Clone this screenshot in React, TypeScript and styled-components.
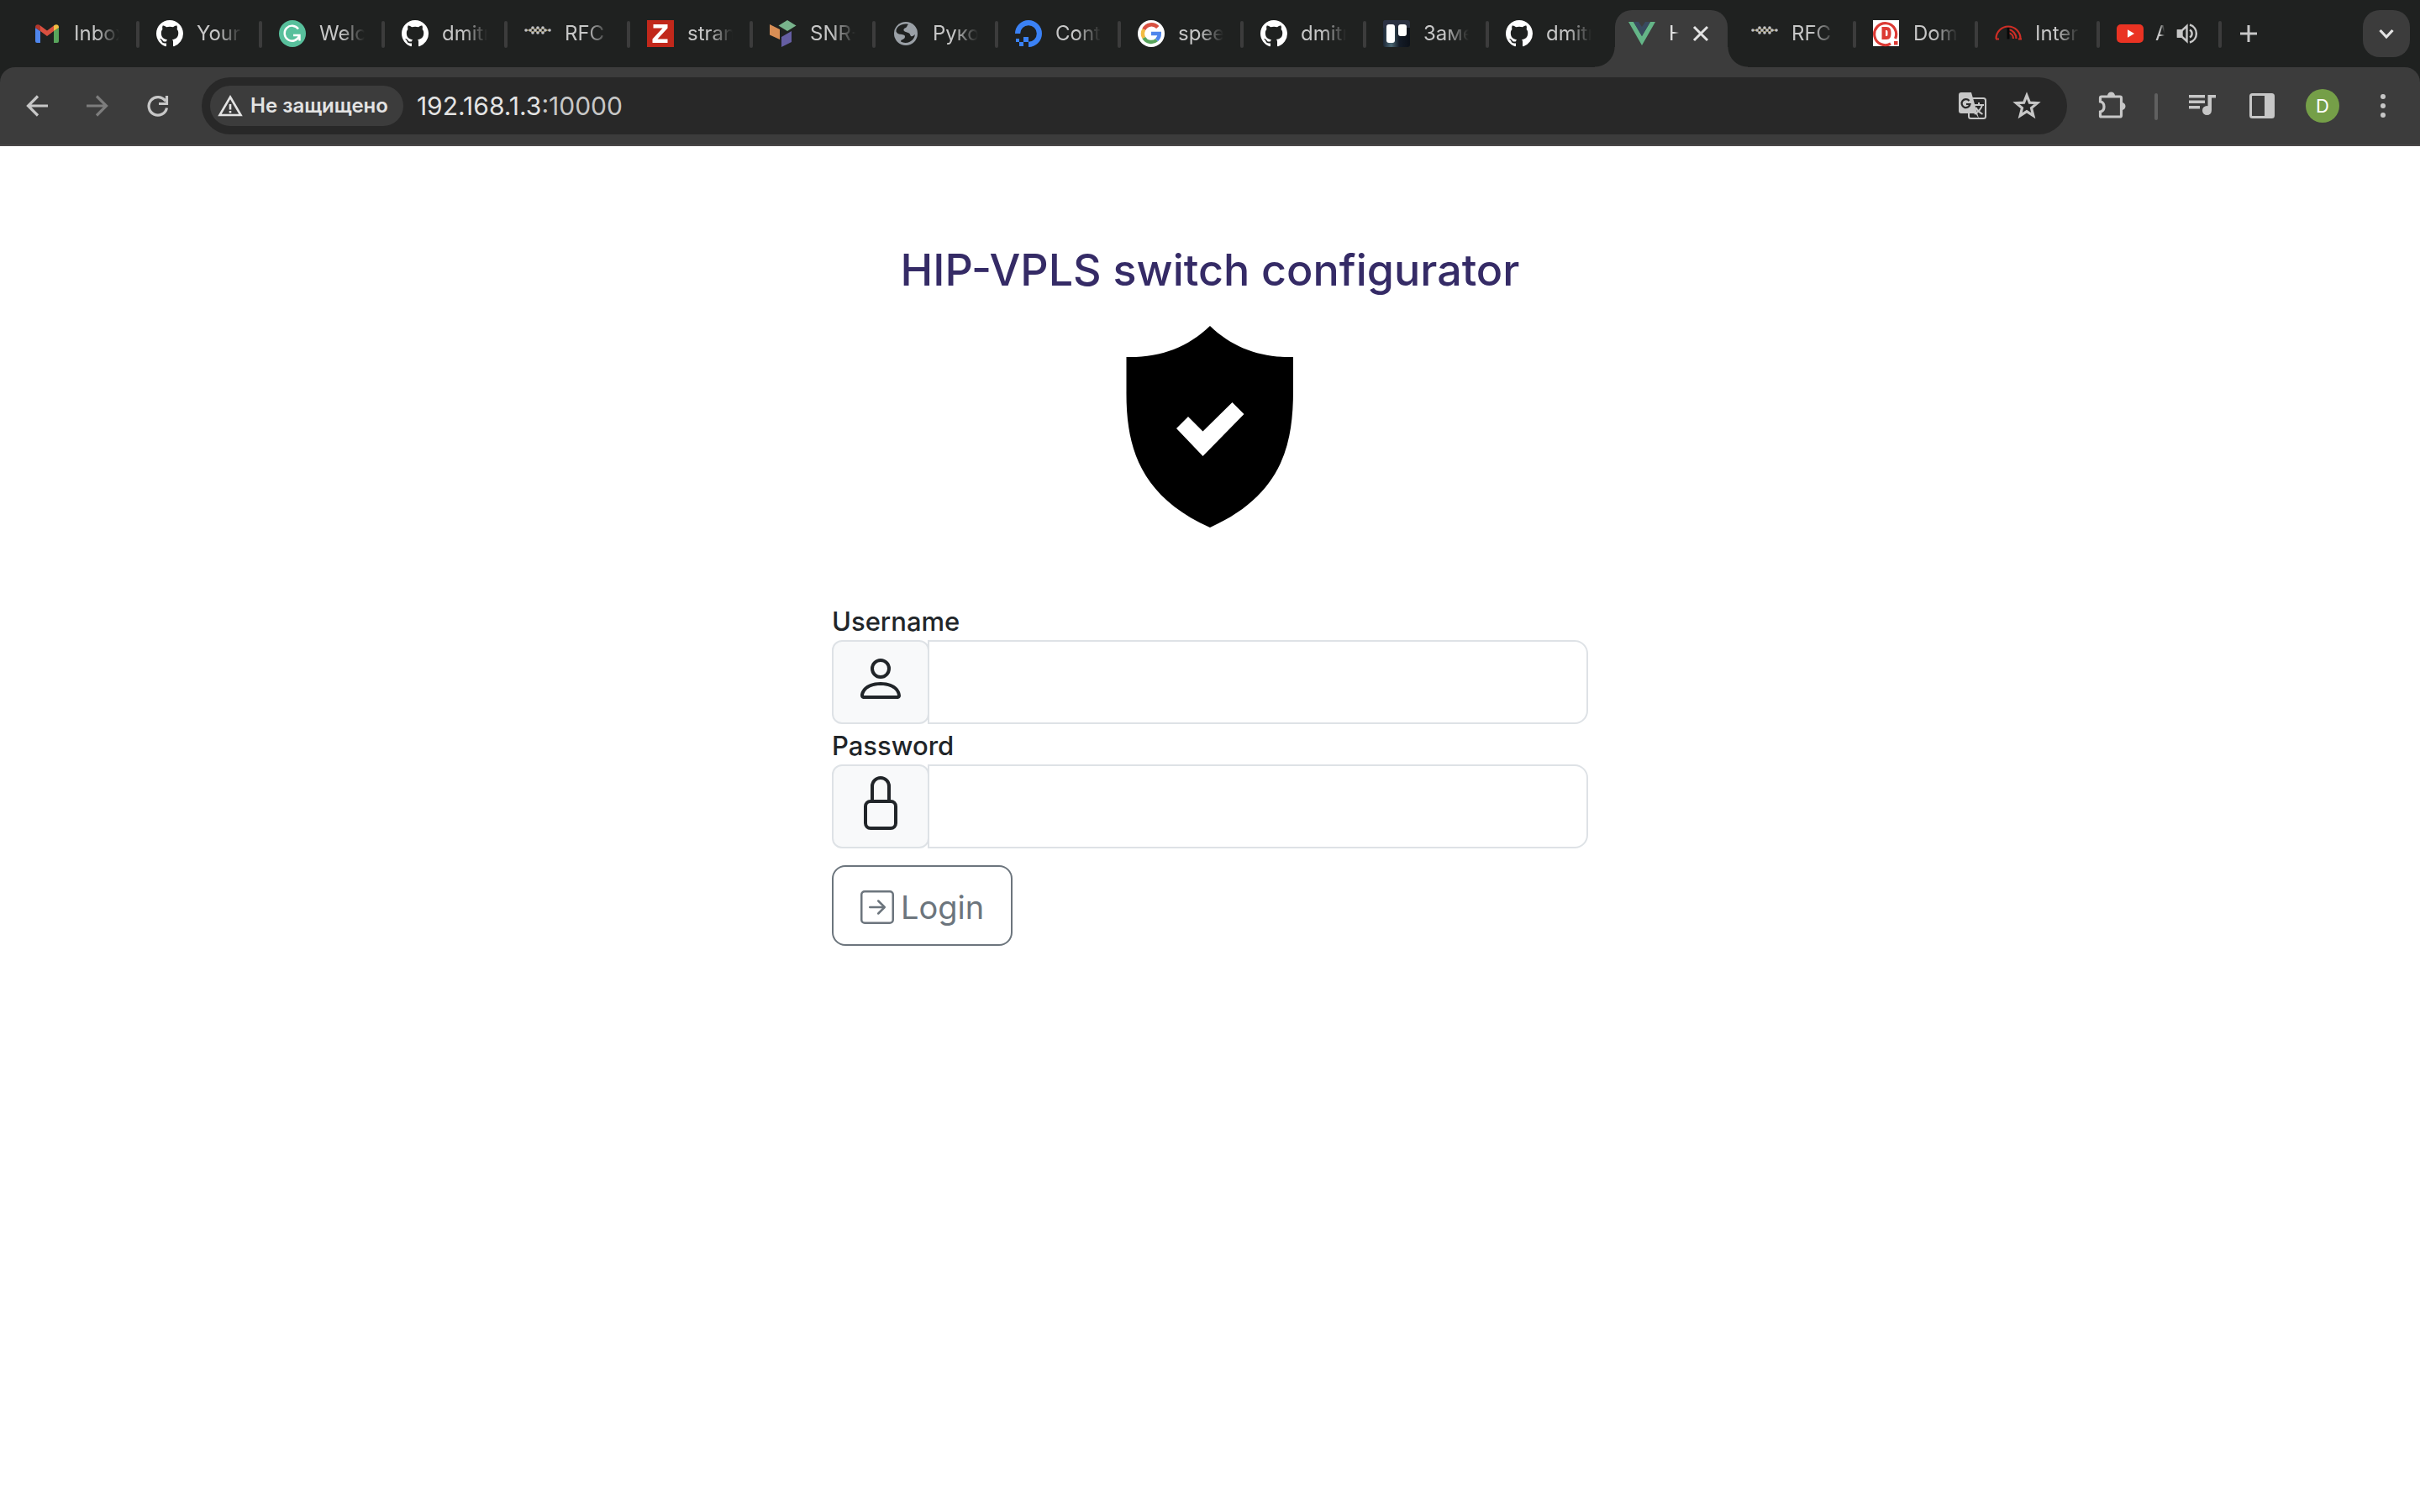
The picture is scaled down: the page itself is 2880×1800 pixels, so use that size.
import React from "react";
import styled, { createGlobalStyle, css } from "styled-components";

const colors = {
  strip: "#1f2120",
  toolbar: "#3c3c3c",
  omnibox: "#282828",
  icon: "#c7c7c7",
  iconDim: "#7d7d7d",
  bright: "#e3e3e3",
  title: "#352b66",
  body: "#212529",
  border: "#dee2e6",
  addon: "#f8f9fa",
  secondary: "#6c757d",
};

const GlobalStyle = createGlobalStyle`
  * { box-sizing: border-box; }
  body {
    margin: 0;
    background: #fff;
    font-family: Inter, "Liberation Sans", sans-serif;
    color: ${colors.body};
  }
  button, input { font: inherit; color: inherit; }
  svg { display: block; flex: none; }
`;

/* ---------- browser chrome ---------- */

const Chrome = styled.header`
  background: ${colors.strip};
`;

const TabStrip = styled.nav`
  display: flex;
  height: 80px;
  padding: 0 12px 0 20px;
`;

const tabBase = css`
  display: flex;
  align-items: center;
  gap: 16px;
  flex: none;
  border: 0;
  background: none;
`;

const Tab = styled.button<{ $width?: number }>`
  ${tabBase}
  width: ${({ $width = 142 }) => $width}px;
  padding: 0 20px;
  text-align: left;
  color: ${colors.icon};
`;

const AudioTab = styled(Tab)`
  gap: 14px;
  padding-right: 24px;
`;

const ActiveTab = styled.div`
  ${tabBase}
  position: relative;
  width: 134px;
  margin: 12px 8px 0;
  padding: 0 22px 12px 16px;
  border-radius: 20px 20px 0 0;
  background: ${colors.toolbar};
  color: ${colors.bright};

  &::before,
  &::after {
    content: "";
    position: absolute;
    bottom: 0;
    width: 24px;
    height: 24px;
  }
  &::before {
    right: 100%;
    background: radial-gradient(circle at 0 0, transparent 23px, ${colors.toolbar} 24px);
  }
  &::after {
    left: 100%;
    background: radial-gradient(circle at 100% 0, transparent 23px, ${colors.toolbar} 24px);
  }
`;

const TabTitle = styled.span`
  flex: 1;
  min-width: 0;
  overflow: hidden;
  white-space: nowrap;
  font-size: 24px;
  line-height: 32px;
  mask-image: linear-gradient(to right, #000 calc(100% - 28px), transparent);
`;

const ShortTitle = styled(TabTitle)`
  mask-image: linear-gradient(to right, #000 50%, transparent);
`;

const Separator = styled.span`
  flex: none;
  align-self: center;
  width: 4px;
  height: 32px;
  margin-bottom: -2px;
  border-radius: 2px;
  background: ${({ color }) => color || colors.toolbar};
`;

const IconButton = styled.button<{ $size?: number; $dim?: boolean }>`
  display: grid;
  place-items: center;
  flex: none;
  width: ${({ $size = 40 }) => $size}px;
  height: ${({ $size = 40 }) => $size}px;
  padding: 0;
  border: 0;
  background: none;
  color: ${({ $dim }) => ($dim ? colors.iconDim : colors.icon)};
`;

const NewTab = styled(IconButton)`
  align-self: center;
  margin-left: 12px;
`;

const TabSearch = styled(IconButton)`
  align-self: center;
  width: 56px;
  height: 56px;
  margin-left: auto;
  border-radius: 20px;
  background: ${colors.toolbar};
  color: ${colors.bright};
`;

const Toolbar = styled.div`
  display: flex;
  align-items: center;
  height: 94px;
  padding: 0 24px;
  border-bottom: 2px solid #4a4748;
  border-radius: 18px 18px 0 0;
  background: ${colors.toolbar};
`;

const NavGroup = styled.div`
  display: flex;
  gap: 32px;
`;

const Omnibox = styled.div`
  display: flex;
  align-items: center;
  flex: 1;
  height: 68px;
  margin-left: 32px;
  padding: 0 28px 0 10px;
  border-radius: 34px;
  background: ${colors.omnibox};
`;

const SecurityChip = styled.button`
  display: flex;
  align-items: center;
  gap: 8px;
  flex: none;
  height: 48px;
  padding: 0 18px 0 8px;
  border: 0;
  border-radius: 24px;
  background: ${colors.toolbar};
  color: ${colors.bright};
  font-size: 24px;
  font-weight: 600;
  line-height: 32px;
`;

const Address = styled.a`
  flex: 1;
  margin-left: 16px;
  color: ${colors.bright};
  font-size: 30px;
  line-height: 36px;
  text-decoration: none;
`;

const Port = styled.span`
  color: ${colors.icon};
`;

const OmniActions = styled.div`
  display: flex;
  gap: 24px;
`;

const ToolGroup = styled.div`
  display: flex;
  align-items: center;
  gap: 32px;
  margin-left: 32px;
`;

const Avatar = styled.button`
  width: 40px;
  height: 40px;
  padding: 0;
  border: 0;
  border-radius: 50%;
  background: #759f48;
  color: #fff;
  font-size: 22px;
  line-height: 40px;
`;

/* ---------- page ---------- */

const Page = styled.main`
  display: flex;
  flex-direction: column;
  align-items: center;
  padding: 114px 24px;
`;

const Heading = styled.h1`
  margin: 0 0 32px;
  color: ${colors.title};
  font-size: 52px;
  font-weight: 500;
  line-height: 68px;
`;

const LoginForm = styled.form`
  display: flex;
  flex-direction: column;
  align-items: flex-start;
  width: 100%;
  max-width: 900px;
  margin-top: 86px;
`;

const FieldLabel = styled.label`
  padding-top: 4px;
  font-size: 31px;
  font-weight: 500;
  line-height: 44px;
`;

const InputGroup = styled.div`
  display: flex;
  width: 100%;
`;

const Addon = styled.span`
  flex: none;
  padding: 12px 24px 20px;
  border: 2px solid ${colors.border};
  border-radius: 12px;
  background: ${colors.addon};
`;

const TextInput = styled.input`
  flex: 1;
  min-width: 0;
  margin-left: -2px;
  padding: 16px 32px;
  border: 2px solid ${colors.border};
  border-radius: 0 16px 16px 0;
  background: #fff;
  font-size: 38px;
  outline: 0;
`;

const LoginButton = styled.button`
  display: flex;
  align-items: center;
  gap: 8px;
  margin-top: 20px;
  padding: 18px 32px 14px;
  border: 2px solid ${colors.secondary};
  border-radius: 16px;
  background: #fff;
  color: ${colors.secondary};
  font-size: 38px;
  line-height: 60px;
`;

/* ---------- favicons ---------- */

const Gmail = () => (
  <svg width="32" height="32" viewBox="0 0 32 32">
    <path d="M2 9v16a2 2 0 0 0 2 2h4V13z" fill="#4f86ec" />
    <path d="M30 9v16a2 2 0 0 1-2 2h-4V13z" fill="#58a55c" />
    <path d="M8 6.500l8 6 8-6V13l-8 6-8-6z" fill="#d95040" />
    <path d="M2 8.500C2 5 5.500 4.500 8 6.500V13l-6-4z" fill="#b3372c" />
    <path d="M30 8.500C30 5 26.500 4.500 24 6.500V13l6-4z" fill="#f2bd42" />
  </svg>
);

const GitHub = () => (
  <svg width="32" height="32" viewBox="0 0 16 16" fill="#fff">
    <path d="M8 0C3.58 0 0 3.58 0 8c0 3.54 2.29 6.53 5.47 7.59.4.07.55-.17.55-.38 0-.19-.01-.82-.01-1.49-2.01.37-2.53-.49-2.69-.94-.09-.23-.48-.94-.82-1.13-.28-.15-.68-.52-.01-.53.63-.01 1.08.58 1.23.82.72 1.21 1.87.87 2.33.66.07-.52.28-.87.51-1.07-1.78-.2-3.64-.89-3.64-3.95 0-.87.31-1.59.82-2.15-.08-.2-.36-1.02.08-2.12 0 0 .67-.21 2.2.82.64-.18 1.32-.27 2-.27s1.36.09 2 .27c1.53-1.04 2.2-.82 2.2-.82.44 1.1.16 1.92.08 2.12.51.56.82 1.27.82 2.15 0 3.07-1.87 3.75-3.65 3.95.29.25.54.73.54 1.48 0 1.07-.01 1.93-.01 2.2 0 .21.15.46.55.38A8.010 8.010 0 0 0 16 8c0-4.420-3.580-8-8-8" />
  </svg>
);

const Grammarly = () => (
  <svg width="32" height="32" viewBox="0 0 32 32">
    <circle cx="16" cy="16" r="16" fill="#58c09c" />
    <path d="M23 10.500A9 9 0 1 0 24 19" fill="none" stroke="#fff" strokeWidth="2.400" />
    <path d="M17 18h7.500v6.500" fill="none" stroke="#fff" strokeWidth="2.400" />
  </svg>
);

const knots: [number, number][] = [
  [2, 12], [7, 12], [10, 9], [10, 15], [13, 12], [16, 9], [16, 15], [19, 12], [22, 9], [22, 15], [25, 12], [30, 12],
];

const Ietf = () => (
  <svg width="32" height="32" viewBox="0 0 32 32">
    <path d="M1 12h6l3-3 6 6 6-6 3 3h6M7 12l3 3 6-6 6 6 3-3" fill="none" stroke="#a08a4a" strokeWidth="1.400" />
    {knots.map(([x, y]) => (
      <circle key={`${x}-${y}`} cx={x} cy={y} r="1.800" fill="#bfc1c6" />
    ))}
  </svg>
);

const Zed = () => (
  <svg width="32" height="32" viewBox="0 0 32 32">
    <path d="M0 0h32v32H0z" fill="#c1281b" />
    <path d="M7.500 5h17v4.500L12.500 22.500h12V27H6.500v-4.500l12-13h-11z" fill="#fff" />
  </svg>
);

const Snr = () => (
  <svg width="32" height="32" viewBox="0 0 32 32">
    <path d="M21 0l10.500 6.500L21 13 10.500 6.500z" fill="#78b48c" />
    <path d="M0 5l12 6v12L0 17.500z" fill="#d98e55" />
    <path d="M26 13v13l-12 6V20z" fill="#655ea3" />
  </svg>
);

const Globe = () => (
  <svg width="32" height="32" viewBox="0 0 32 32">
    <circle cx="16" cy="16" r="14" fill="#9aa0a6" />
    <path
      d="M19 5c-2 1-1 3-3 4-3 1-3 3-2 4 2 2 6 1 7 4 1 4 4 2 6 0A11.500 11.500 0 0 1 10 25.500c0-3 5-2 5-6 0-3-5-2-7-3-2-.5-3-2-3.500-3C4 8 12 3 19 5z"
      fill={colors.strip}
    />
  </svg>
);

const DigitalOcean = () => (
  <svg width="32" height="32" viewBox="0 0 32 32" fill="#3b82f6">
    <path d="M16 32v-6.200A9.800 9.800 0 1 0 6.200 16H0a16 16 0 1 1 16 16z" />
    <path d="M10 20h6v6h-6zM5 26h5v5H5zM1 22h4v4H1z" />
  </svg>
);

const Google = () => (
  <svg width="32" height="32" viewBox="0 0 32 32">
    <circle cx="16" cy="16" r="16" fill="#fff" />
    <g fill="none" strokeWidth="4.400">
      <path d="M23.800 8.600A10 10 0 0 0 7.300 11.200" stroke="#d95040" />
      <path d="M7.300 11.200a10 10 0 0 0 0 9.800" stroke="#f2bd42" />
      <path d="M7.300 21a10 10 0 0 0 15.200 2.600" stroke="#58a55c" />
      <path d="M22.500 23.600A10 10 0 0 0 25.800 16H16" stroke="#4f86ec" />
    </g>
  </svg>
);

const Trello = () => (
  <svg width="32" height="32" viewBox="0 0 32 32">
    <defs>
      <linearGradient id="night" x1="0" y1="1" x2="1" y2="1">
        <stop offset="0" stopColor="#1d2735" />
        <stop offset=".3" stopColor="#4a6672" />
        <stop offset=".6" stopColor="#141c28" />
        <stop offset="1" stopColor="#0c1119" />
      </linearGradient>
    </defs>
    <rect width="32" height="32" rx="3" fill="url(#night)" />
    <path d="M0 3a3 3 0 0 1 3-3h26a3 3 0 0 1 3 3v6H0z" fill="#2b3142" />
    <rect x="4" y="5" width="10" height="22" rx="3" fill="#fff" />
    <rect x="18" y="5" width="10" height="14" rx="3" fill="#fff" />
  </svg>
);

const Vue = () => (
  <svg width="32" height="32" viewBox="0 0 32 32">
    <path d="M0 2h6l10 17L26 2h6L16 30z" fill="#64b587" />
    <path d="M6 2h6l4 6 4-6h6L16 19z" fill="#384a5f" />
  </svg>
);

const Domain = () => (
  <svg width="32" height="32" viewBox="0 0 32 32">
    <path d="M0 0h31v31H0z" fill="#fff" />
    <path d="M26.500 22A13 13 0 1 0 21 28" fill="none" stroke="#dc3a34" strokeWidth="3.200" />
    <path d="M10.500 8h5.500c4.500 0 5.500 3 5.500 7.500S20.500 23 16 23h-5.500z" fill="#dc3a34" />
    <path d="M15 12v7c2.500 0 2.500-.5 2.500-3.500s0-3.500-2.500-3.500z" fill="#fff" />
    <rect x="25" y="25" width="4.500" height="4.500" fill="#dc3a34" />
  </svg>
);

const Speed = () => (
  <svg width="32" height="32" viewBox="0 0 32 32" fill="none" stroke="#cf2e26" strokeWidth="2.200">
    <path d="M1 22.500h4M28 22.500h4M1.500 22A14.500 14.500 0 0 1 30.500 22" />
    <path d="M16 11a11 11 0 0 1 9.500 11M16 15a7 7 0 0 1 6 7" />
    <path d="M16 9v13.500" stroke="#080808" strokeWidth="3" />
  </svg>
);

const YouTube = () => (
  <svg width="32" height="32" viewBox="0 0 32 32">
    <rect y="5" width="32" height="22" rx="5" fill="#ea3323" />
    <path d="M13 11.300v9.400l8-4.700z" fill="#fff" />
  </svg>
);

/* ---------- control icons ---------- */

const Arrow = ({ back = false }: { back?: boolean }) => (
  <svg width="40" height="40" viewBox="0 0 40 40" fill="none" stroke="currentColor" strokeWidth="3.200">
    {back ? <path d="M33 20H10M21 8.500L9.500 20 21 31.500" /> : <path d="M7 20h23M19 8.500L30.500 20 19 31.500" />}
  </svg>
);

const Reload = () => (
  <svg width="40" height="40" viewBox="0 0 40 40" fill="none" stroke="currentColor" strokeWidth="3.200">
    <path d="M29 14.500A10.800 10.800 0 1 0 30.500 22.500M30.500 8v9.500H21" />
  </svg>
);

const Warning = () => (
  <svg width="32" height="32" viewBox="0 0 32 32">
    <path d="M16 5.500L28.500 27h-25z" fill="none" stroke="currentColor" strokeWidth="2.600" />
    <path d="M14.700 14h2.600v6.500h-2.600zM14.700 22h2.600v2.500h-2.600z" fill="currentColor" />
  </svg>
);

const Close = () => (
  <svg width="20" height="20" viewBox="0 0 20 20" stroke={colors.bright} strokeWidth="3">
    <path d="M2 2l16 16M18 2L2 18" />
  </svg>
);

const Plus = () => (
  <svg width="24" height="24" viewBox="0 0 24 24" stroke="currentColor" strokeWidth="3">
    <path d="M12 2v20M2 12h20" />
  </svg>
);

const Chevron = () => (
  <svg width="24" height="24" viewBox="0 0 24 24" fill="none" stroke="currentColor" strokeWidth="3.200">
    <path d="M4.500 8l7.500 8 7.500-8" />
  </svg>
);

const Volume = () => (
  <svg width="26" height="26" viewBox="0 0 26 26" fill="none" stroke="currentColor" strokeWidth="2.400">
    <path d="M2 9.500h4.500L12.500 4v18l-6-5.500H2z" />
    <path d="M2 9.500h4.500v7H2z" fill="currentColor" />
    <path d="M16 8.500c3.500 2 3.500 7 0 9M16 2.500c10.500 3 10.500 18 0 21" />
  </svg>
);

const Translate = () => (
  <svg width="36" height="36" viewBox="0 0 36 36">
    <rect x="13" y="9" width="20" height="24" rx="2.500" fill="none" stroke="currentColor" strokeWidth="2" />
    <path d="M19 17h12M25 14v3M29 17c-1.500 5-5 8.500-9 11M21.500 20c1.500 3.500 4.500 6 8 8" fill="none" stroke="currentColor" strokeWidth="2" />
    <path d="M4 2h12l9 31-4-6H4a3 3 0 0 1-3-3V5a3 3 0 0 1 3-3z" fill="currentColor" />
    <path d="M13.500 12A5 5 0 1 0 14.500 16H10" fill="none" stroke={colors.omnibox} strokeWidth="2.200" />
  </svg>
);

const Star = () => (
  <svg width="36" height="36" viewBox="0 0 36 36">
    <path
      d="M18 5.500l3.400 8.600 9.200.6-7.100 5.900 2.300 9-7.800-5-7.800 5 2.300-9-7.100-5.900 9.200-.6z"
      fill="none"
      stroke="currentColor"
      strokeWidth="3.200"
    />
  </svg>
);

const Puzzle = () => (
  <svg width="40" height="40" viewBox="0 0 40 40">
    <path
      d="M9 9h22a1.500 1.500 0 0 1 1.500 1.500v21a1.500 1.500 0 0 1-1.500 1.500H8.500a1 1 0 0 1-1-1v-5c6-1 6-11 0-12v-4.500A1.500 1.500 0 0 1 9 9z"
      fill="none"
      stroke="currentColor"
      strokeWidth="3.200"
    />
    <path d="M16 8a4.500 4.500 0 0 1 9 0zM33 16a4.500 4.500 0 0 1 0 9z" fill="currentColor" />
  </svg>
);

const Playlist = () => (
  <svg width="40" height="40" viewBox="0 0 40 40" fill="currentColor">
    <path d="M5 7h19v3.500H5zM5 13.500h19V17H5zM5 20h13v3.500H5zM27.500 7H37v3.500h-5V25h-4.500z" />
    <circle cx="26.500" cy="25.500" r="5.500" />
  </svg>
);

const SidePanel = () => (
  <svg width="40" height="40" viewBox="0 0 40 40">
    <rect x="6.500" y="6.500" width="27" height="27" rx="2" fill="none" stroke="currentColor" strokeWidth="3" />
    <path d="M23 6h10v28H23z" fill="currentColor" />
  </svg>
);

const Dots = () => (
  <svg width="40" height="40" viewBox="0 0 40 40" fill="currentColor">
    <circle cx="20" cy="9" r="3" />
    <circle cx="20" cy="20" r="3" />
    <circle cx="20" cy="31" r="3" />
  </svg>
);

/* ---------- page icons ---------- */

const Shield = () => (
  <svg width="240" height="240" viewBox="0 0 240 240">
    <path d="M120 0c27 26 60 38 99 37v40c0 62-12 124-99 163C33 201 20 139 20.500 77V37C60 38 93 26 120 0z" />
    <path d="M80 122l14-14 17.500 17.500 35-34.500 14 14-49 50z" fill="#fff" />
  </svg>
);

const Person = () => (
  <svg width="64" height="64" viewBox="0 0 16 16" fill="currentColor">
    <path d="M8 8a3 3 0 1 0 0-6 3 3 0 0 0 0 6m2-3a2 2 0 1 1-4 0 2 2 0 0 1 4 0m4 8c0 1-1 1-1 1H3s-1 0-1-1 1-4 6-4 6 3 6 4m-1-.004c-.001-.246-.154-.986-.832-1.664C11.516 10.680 10.289 10 8 10s-3.516.680-4.168 1.332c-.678.678-.830 1.418-.832 1.664z" />
  </svg>
);

const Lock = () => (
  <svg width="64" height="64" viewBox="0 0 16 16" fill="currentColor">
    <path d="M8 1a2 2 0 0 1 2 2v4H6V3a2 2 0 0 1 2-2m3 6V3a3 3 0 0 0-6 0v4a2 2 0 0 0-2 2v5a2 2 0 0 0 2 2h6a2 2 0 0 0 2-2V9a2 2 0 0 0-2-2M5 8h6a1 1 0 0 1 1 1v5a1 1 0 0 1-1 1H5a1 1 0 0 1-1-1V9a1 1 0 0 1 1-1" />
  </svg>
);

const Enter = () => (
  <svg width="40" height="40" viewBox="0 0 16 16" fill="currentColor">
    <path d="M15 2a1 1 0 0 0-1-1H2a1 1 0 0 0-1 1v12a1 1 0 0 0 1 1h12a1 1 0 0 0 1-1zM0 2a2 2 0 0 1 2-2h12a2 2 0 0 1 2 2v12a2 2 0 0 1-2 2H2a2 2 0 0 1-2-2zm4.500 5.500a.5.5 0 0 0 0 1h5.793l-2.147 2.146a.5.5 0 0 0 .708.708l3-3a.5.5 0 0 0 0-.708l-3-3a.5.5 0 1 0-.708.708L10.293 7.500z" />
  </svg>
);

type TabInfo = { icon: React.ComponentType; title: string; width?: number };

const tabsBefore: TabInfo[] = [
  { icon: Gmail, title: "Inbox" },
  { icon: GitHub, title: "Your" },
  { icon: Grammarly, title: "Welc" },
  { icon: GitHub, title: "dmitr" },
  { icon: Ietf, title: "RFC" },
  { icon: Zed, title: "stran" },
  { icon: Snr, title: "SNR-" },
  { icon: Globe, title: "Руко" },
  { icon: DigitalOcean, title: "Cont" },
  { icon: Google, title: "spee" },
  { icon: GitHub, title: "dmitr" },
  { icon: Trello, title: "Заме" },
  { icon: GitHub, title: "dmitr" },
];

const tabsAfter: TabInfo[] = [
  { icon: Ietf, title: "RFC" },
  { icon: Domain, title: "Dom" },
  { icon: Speed, title: "Inter" },
];

const TabItem = ({ icon: Icon, title, width }: TabInfo) => (
  <Tab type="button" $width={width}>
    <Icon />
    <TabTitle>{title}</TabTitle>
  </Tab>
);

const Browser = () => (
  <Chrome>
    <TabStrip>
      {tabsBefore.map((tab, i) => (
        <React.Fragment key={i}>
          {i > 0 && <Separator />}
          <TabItem {...tab} />
        </React.Fragment>
      ))}
      <ActiveTab>
        <Vue />
        <ShortTitle>H</ShortTitle>
        <IconButton $size={20} type="button" aria-label="Close tab">
          <Close />
        </IconButton>
      </ActiveTab>
      {tabsAfter.map((tab) => (
        <React.Fragment key={tab.title}>
          <TabItem {...tab} width={141} />
          <Separator />
        </React.Fragment>
      ))}
      <AudioTab type="button" $width={141}>
        <YouTube />
        <ShortTitle>A</ShortTitle>
        <Volume />
      </AudioTab>
      <Separator />
      <NewTab type="button" aria-label="New tab">
        <Plus />
      </NewTab>
      <TabSearch type="button" aria-label="Search tabs">
        <Chevron />
      </TabSearch>
    </TabStrip>
    <Toolbar>
      <NavGroup>
        <IconButton type="button" aria-label="Back">
          <Arrow back />
        </IconButton>
        <IconButton type="button" aria-label="Forward" $dim>
          <Arrow />
        </IconButton>
        <IconButton type="button" aria-label="Reload">
          <Reload />
        </IconButton>
      </NavGroup>
      <Omnibox>
        <SecurityChip type="button">
          <Warning />
          Не защищено
        </SecurityChip>
        <Address href="#">
          192.168.1.3<Port>:10000</Port>
        </Address>
        <OmniActions>
          <IconButton type="button" aria-label="Translate">
            <Translate />
          </IconButton>
          <IconButton type="button" aria-label="Bookmark">
            <Star />
          </IconButton>
        </OmniActions>
      </Omnibox>
      <ToolGroup>
        <IconButton type="button" aria-label="Extensions">
          <Puzzle />
        </IconButton>
        <Separator color="#606060" />
        <IconButton type="button" aria-label="Media">
          <Playlist />
        </IconButton>
        <IconButton type="button" aria-label="Side panel">
          <SidePanel />
        </IconButton>
        <Avatar type="button">D</Avatar>
        <IconButton type="button" aria-label="Menu">
          <Dots />
        </IconButton>
      </ToolGroup>
    </Toolbar>
  </Chrome>
);

export default function App() {
  return (
    <>
      <GlobalStyle />
      <Browser />
      <Page>
        <Heading>HIP-VPLS switch configurator</Heading>
        <Shield />
        <LoginForm onSubmit={(event) => event.preventDefault()}>
          <FieldLabel htmlFor="username">Username</FieldLabel>
          <InputGroup>
            <Addon>
              <Person />
            </Addon>
            <TextInput id="username" type="text" />
          </InputGroup>
          <FieldLabel htmlFor="password">Password</FieldLabel>
          <InputGroup>
            <Addon>
              <Lock />
            </Addon>
            <TextInput id="password" type="password" />
          </InputGroup>
          <LoginButton type="submit">
            <Enter />
            Login
          </LoginButton>
        </LoginForm>
      </Page>
    </>
  );
}
